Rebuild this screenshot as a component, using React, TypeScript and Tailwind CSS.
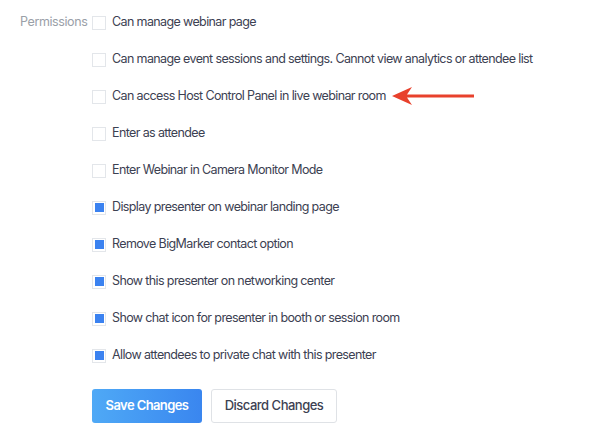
import React from "react";

const items: { label: string; checked: boolean }[] = [
  { label: "Can manage webinar page", checked: false },
  { label: "Can manage event sessions and settings. Cannot view analytics or attendee list", checked: false },
  { label: "Can access Host Control Panel in live webinar room", checked: false },
  { label: "Enter as attendee", checked: false },
  { label: "Enter Webinar in Camera Monitor Mode", checked: false },
  { label: "Display presenter on webinar landing page", checked: true },
  { label: "Remove BigMarker contact option", checked: true },
  { label: "Show this presenter on networking center", checked: true },
  { label: "Show chat icon for presenter in booth or session room", checked: true },
  { label: "Allow attendees to private chat with this presenter", checked: true },
];

function Box({ checked }: { checked: boolean }) {
  return (
    <div className="w-[14px] h-[14px] border border-[#e3e6ea] bg-white flex items-center justify-center shrink-0">
      {checked && <div className="w-[9px] h-[9px] bg-[#3b82f0]" />}
    </div>
  );
}

export default function App() {
  return (
    <div
      className="w-[600px] h-[436px] bg-white flex pt-[12px] pl-[20px] tracking-[-0.62px]"
      style={{ fontFamily: "Inter, 'Noto Sans', sans-serif" }}
    >
      <div className="w-[72px] text-[12.5px] text-[#9aa0a8] leading-[20px] tracking-[-0.4px]">Permissions</div>
      <div className="flex flex-col">
        {items.map((it, i) => (
          <div key={i} className="flex items-center h-[37px] relative" style={{ marginTop: i === 0 ? -8 : 0 }}>
            <Box checked={it.checked} />
            <span className="ml-[6px] text-[12.5px] text-[#3c4152]">{it.label}</span>
            {i === 2 && (
              <svg className="absolute left-[300px] top-[8px]" width="84" height="20" viewBox="0 0 84 20">
                <path d="M0 10 L20 1 L15 8.5 L82 8.5 L82 11.5 L15 11.5 L20 19 Z" fill="#e8412c" />
              </svg>
            )}
          </div>
        ))}
        <div className="flex gap-[9px] mt-[15px]">
          <button className="w-[110px] h-[34px] rounded-[3px] bg-gradient-to-r from-[#4fa9f6] to-[#3a86ef] text-white text-[13px] font-semibold tracking-[-0.6px]">
            Save Changes
          </button>
          <button className="w-[126px] h-[34px] rounded-[3px] border border-[#dfe2e6] bg-white text-[#3c4152] text-[13px] font-medium tracking-[-0.5px]">
            Discard Changes
          </button>
        </div>
      </div>
    </div>
  );
}
